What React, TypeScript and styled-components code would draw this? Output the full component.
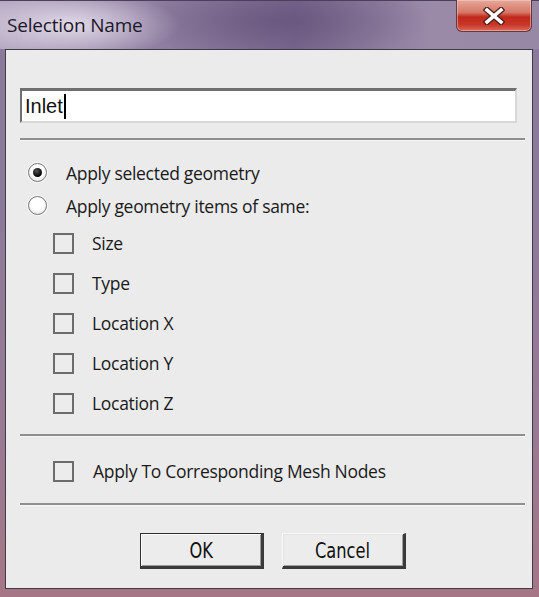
import React from 'react'
import styled, { createGlobalStyle } from 'styled-components'

const GlobalStyle = createGlobalStyle`
  html, body {
    margin: 0;
    padding: 0;
    background: #9a8299;
  }
`

const uiFont = `"Open Sans", "Noto Sans", sans-serif`
const buttonFont = `"Liberation Sans Narrow", "DejaVu Sans Condensed", "Liberation Sans", sans-serif`

const Window = styled.div`
  display: flex;
  flex-direction: column;
  width: 539px;
  height: 597px;
  box-sizing: border-box;
  border-top: 1px solid #4c4058;
  background: linear-gradient(180deg, #8a7a9c 0%, #8c7a9a 35%, #987a94 70%, #a67686 100%);
`

const TitleBar = styled.div`
  display: flex;
  align-items: flex-start;
  justify-content: space-between;
  height: 48px;
  padding-left: 7px;
  background:
    radial-gradient(ellipse 110px 34px at 70px 24px, rgba(236, 230, 242, 0.85), rgba(236, 230, 242, 0) 100%),
    radial-gradient(ellipse 150px 40px at 280px 20px, rgba(92, 72, 112, 0.55), rgba(92, 72, 112, 0) 100%),
    linear-gradient(90deg, #b3a6c0 0%, #8f7ea1 30%, #7b6890 55%, #9a8aa8 80%, #9788a6 100%);
`

const Title = styled.div`
  margin-top: 11px;
  font-family: ${uiFont};
  font-size: 19px;
  color: #1c1828;
  letter-spacing: -0.2px;
`

const CloseButton = styled.div`
  display: flex;
  align-items: center;
  justify-content: center;
  width: 76px;
  height: 32px;
  margin-top: -1px;
  margin-right: 7px;
  box-sizing: border-box;
  border: 1px solid #5e3a42;
  border-top: none;
  border-radius: 0 0 6px 6px;
  background: linear-gradient(180deg, #e5aa9c 0%, #d67766 40%, #c0281a 55%, #c8382a 80%, #dc6a58 100%);
  box-shadow: inset 0 0 0 1px rgba(255, 220, 210, 0.45);
`

const Content = styled.div`
  flex: 1;
  display: flex;
  flex-direction: column;
  margin: 0 6px 8px 5px;
  border: 1px solid #3e3a46;
  background: #ebebeb;
`

const TextField = styled.div`
  display: flex;
  align-items: center;
  width: 497px;
  height: 35px;
  margin: 38px 0 0 14px;
  box-sizing: border-box;
  padding-left: 3px;
  background: #ffffff;
  border-top: 3px solid #6f6f6f;
  border-left: 2px solid #6f6f6f;
  border-right: 2px solid #d8d8d8;
  border-bottom: 2px solid #d8d8d8;
  font-family: "Liberation Sans", Arial, sans-serif;
  font-size: 20px;
  color: #111;
`

const Caret = styled.span`
  display: inline-block;
  width: 0;
  height: 25px;
  margin-left: 1px;
  border-left: 2px solid #000;
`

const Separator = styled.div<{ $top: number }>`
  width: 505px;
  height: 0;
  margin: ${({ $top }) => $top}px 0 0 14px;
  border-top: 2px solid #8e8e8e;
  border-bottom: 1px solid #f6f6f6;
`

const RadioList = styled.div`
  display: flex;
  flex-direction: column;
  margin-top: 15px;
`

const RadioRow = styled.div`
  display: flex;
  align-items: center;
  height: 33px;
  padding-left: 22px;
`

const RadioCircle = styled.span<{ $checked?: boolean }>`
  position: relative;
  display: inline-block;
  width: 19px;
  height: 19px;
  box-sizing: border-box;
  border-radius: 50%;
  border: 1px solid #777777;
  background: radial-gradient(circle at 50% 40%, #ffffff 45%, #d8d8d8 100%);
  box-shadow: 0 0 0 1px rgba(255, 255, 255, 0.7);
  &::after {
    content: '';
    display: ${({ $checked }) => ($checked ? 'block' : 'none')};
    position: absolute;
    left: 4px;
    top: 4px;
    width: 9px;
    height: 9px;
    border-radius: 50%;
    background: radial-gradient(circle at 40% 35%, #555 0%, #000 70%);
  }
`

const Label = styled.span<{ $gap: number }>`
  margin-left: ${({ $gap }) => $gap}px;
  font-family: ${uiFont};
  font-size: 17.5px;
  color: #1a1a1a;
  letter-spacing: -0.3px;
`

const CheckList = styled.div<{ $top: number }>`
  display: flex;
  flex-direction: column;
  margin-top: ${({ $top }) => $top}px;
`

const CheckRow = styled.div`
  display: flex;
  align-items: center;
  height: 40px;
  padding-left: 47px;
`

const CheckBox = styled.span`
  display: inline-block;
  width: 21px;
  height: 21px;
  box-sizing: border-box;
  border: 2px solid #6c6c6c;
  background: #ececec;
`

const ButtonRow = styled.div`
  display: flex;
  justify-content: center;
  gap: 18px;
  margin-top: 27px;
  padding-left: 8px;
`

const Button = styled.div<{ $default?: boolean }>`
  display: flex;
  align-items: center;
  justify-content: center;
  width: 124px;
  height: 36px;
  box-sizing: border-box;
  background: #ececec;
  font-family: ${buttonFont};
  font-size: 22px;
  color: #111;
  border: 1px solid ${({ $default }) => ($default ? '#2e2e2e' : '#f8f8f8')};
  border-right: 3px solid #3a3a3a;
  border-bottom: 3px solid #3a3a3a;
  box-shadow: ${({ $default }) =>
    $default ? 'inset 1px 1px 0 #ffffff, inset -1px -1px 0 #9a9a9a' : 'inset 1px 1px 0 #e4e4e4, inset -1px -1px 0 #a0a0a0'};
`

const ButtonText = styled.span`
  display: inline-block;
  transform: scaleX(0.82);
`

const CloseIcon = () => (
  <svg width="22" height="18" viewBox="0 0 22 18">
    <path d="M4 3 L18 15 M18 3 L4 15" stroke="#4a1a18" strokeWidth="6" strokeLinecap="square" />
    <path d="M4 3 L18 15 M18 3 L4 15" stroke="#ffffff" strokeWidth="3.6" strokeLinecap="square" />
  </svg>
)

const sameItems = ['Size', 'Type', 'Location X', 'Location Y', 'Location Z']

const App = () => (
  <>
    <GlobalStyle />
    <Window>
      <TitleBar>
        <Title>Selection Name</Title>
        <CloseButton>
          <CloseIcon />
        </CloseButton>
      </TitleBar>
      <Content>
        <TextField>
          Inlet
          <Caret />
        </TextField>
        <Separator $top={15} />
        <RadioList>
          <RadioRow>
            <RadioCircle $checked />
            <Label $gap={19}>Apply selected geometry</Label>
          </RadioRow>
          <RadioRow>
            <RadioCircle />
            <Label $gap={19}>Apply geometry items of same:</Label>
          </RadioRow>
        </RadioList>
        <CheckList $top={1}>
          {sameItems.map((item) => (
            <CheckRow key={item}>
              <CheckBox />
              <Label $gap={18}>{item}</Label>
            </CheckRow>
          ))}
        </CheckList>
        <Separator $top={11} />
        <CheckList $top={14}>
          <CheckRow>
            <CheckBox />
            <Label $gap={19}>Apply To Corresponding Mesh Nodes</Label>
          </CheckRow>
        </CheckList>
        <Separator $top={12} />
        <ButtonRow>
          <Button $default>
            <ButtonText>OK</ButtonText>
          </Button>
          <Button>
            <ButtonText>Cancel</ButtonText>
          </Button>
        </ButtonRow>
      </Content>
    </Window>
  </>
)

export default App
